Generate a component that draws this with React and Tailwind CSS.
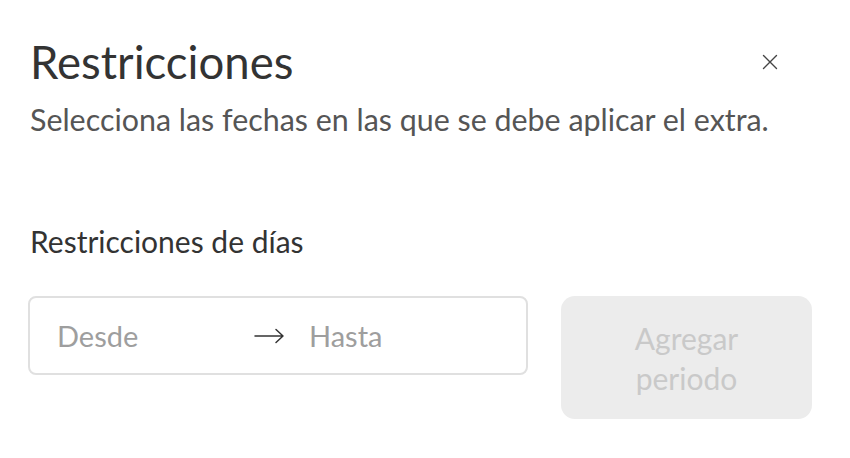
const App = () => {
  return (
    <div className="w-[850px] h-[458px] bg-white font-['Lato','Noto_Sans',sans-serif] overflow-hidden">
      <div className="px-[30px] pt-[34px]">
        <div className="flex items-start justify-between">
          <h1 className="text-[45.5px] leading-[56px] text-[#333333]">Restricciones</h1>
          <button className="mt-[20px] mr-[42px] text-[#444444]">
            <svg width="16" height="16" viewBox="0 0 16 16" fill="none" stroke="currentColor" strokeWidth="1.4" strokeLinecap="round">
              <path d="M1.5 1.5l13 13M14.5 1.5l-13 13" />
            </svg>
          </button>
        </div>
        <p className="mt-[10px] text-[30.4px] leading-[38px] text-[#555555]">
          Selecciona las fechas en las que se debe aplicar el extra.
        </p>

        <h2 className="mt-[84px] text-[30px] leading-[38px] text-[#333333]">Restricciones de días</h2>

        <div className="mt-[36px] flex items-start gap-[33px]">
          <div className="w-[500px] h-[79px] -ml-[2px] border-2 border-[#e0e0e0] rounded-[8px] flex items-center pl-[27px] text-[29px] text-[#9e9e9e]">
            <span className="w-[197px]">Desde</span>
            <span className="w-[55px] flex items-center text-[#333333]">
              <svg width="31" height="16" viewBox="0 0 31 16" fill="none" stroke="currentColor" strokeWidth="1.5" strokeLinecap="round" strokeLinejoin="round">
                <path d="M1 8h28M22 1.5L29 8l-7 6.5" />
              </svg>
            </span>
            <span>Hasta</span>
          </div>
          <button
            disabled
            className="w-[251px] h-[123px] rounded-[14px] bg-[#ececec] text-[#c9c9c9] text-[30px] leading-[40px] px-[60px]"
          >
            Agregar periodo
          </button>
        </div>
      </div>
    </div>
  );
};

export default App;
